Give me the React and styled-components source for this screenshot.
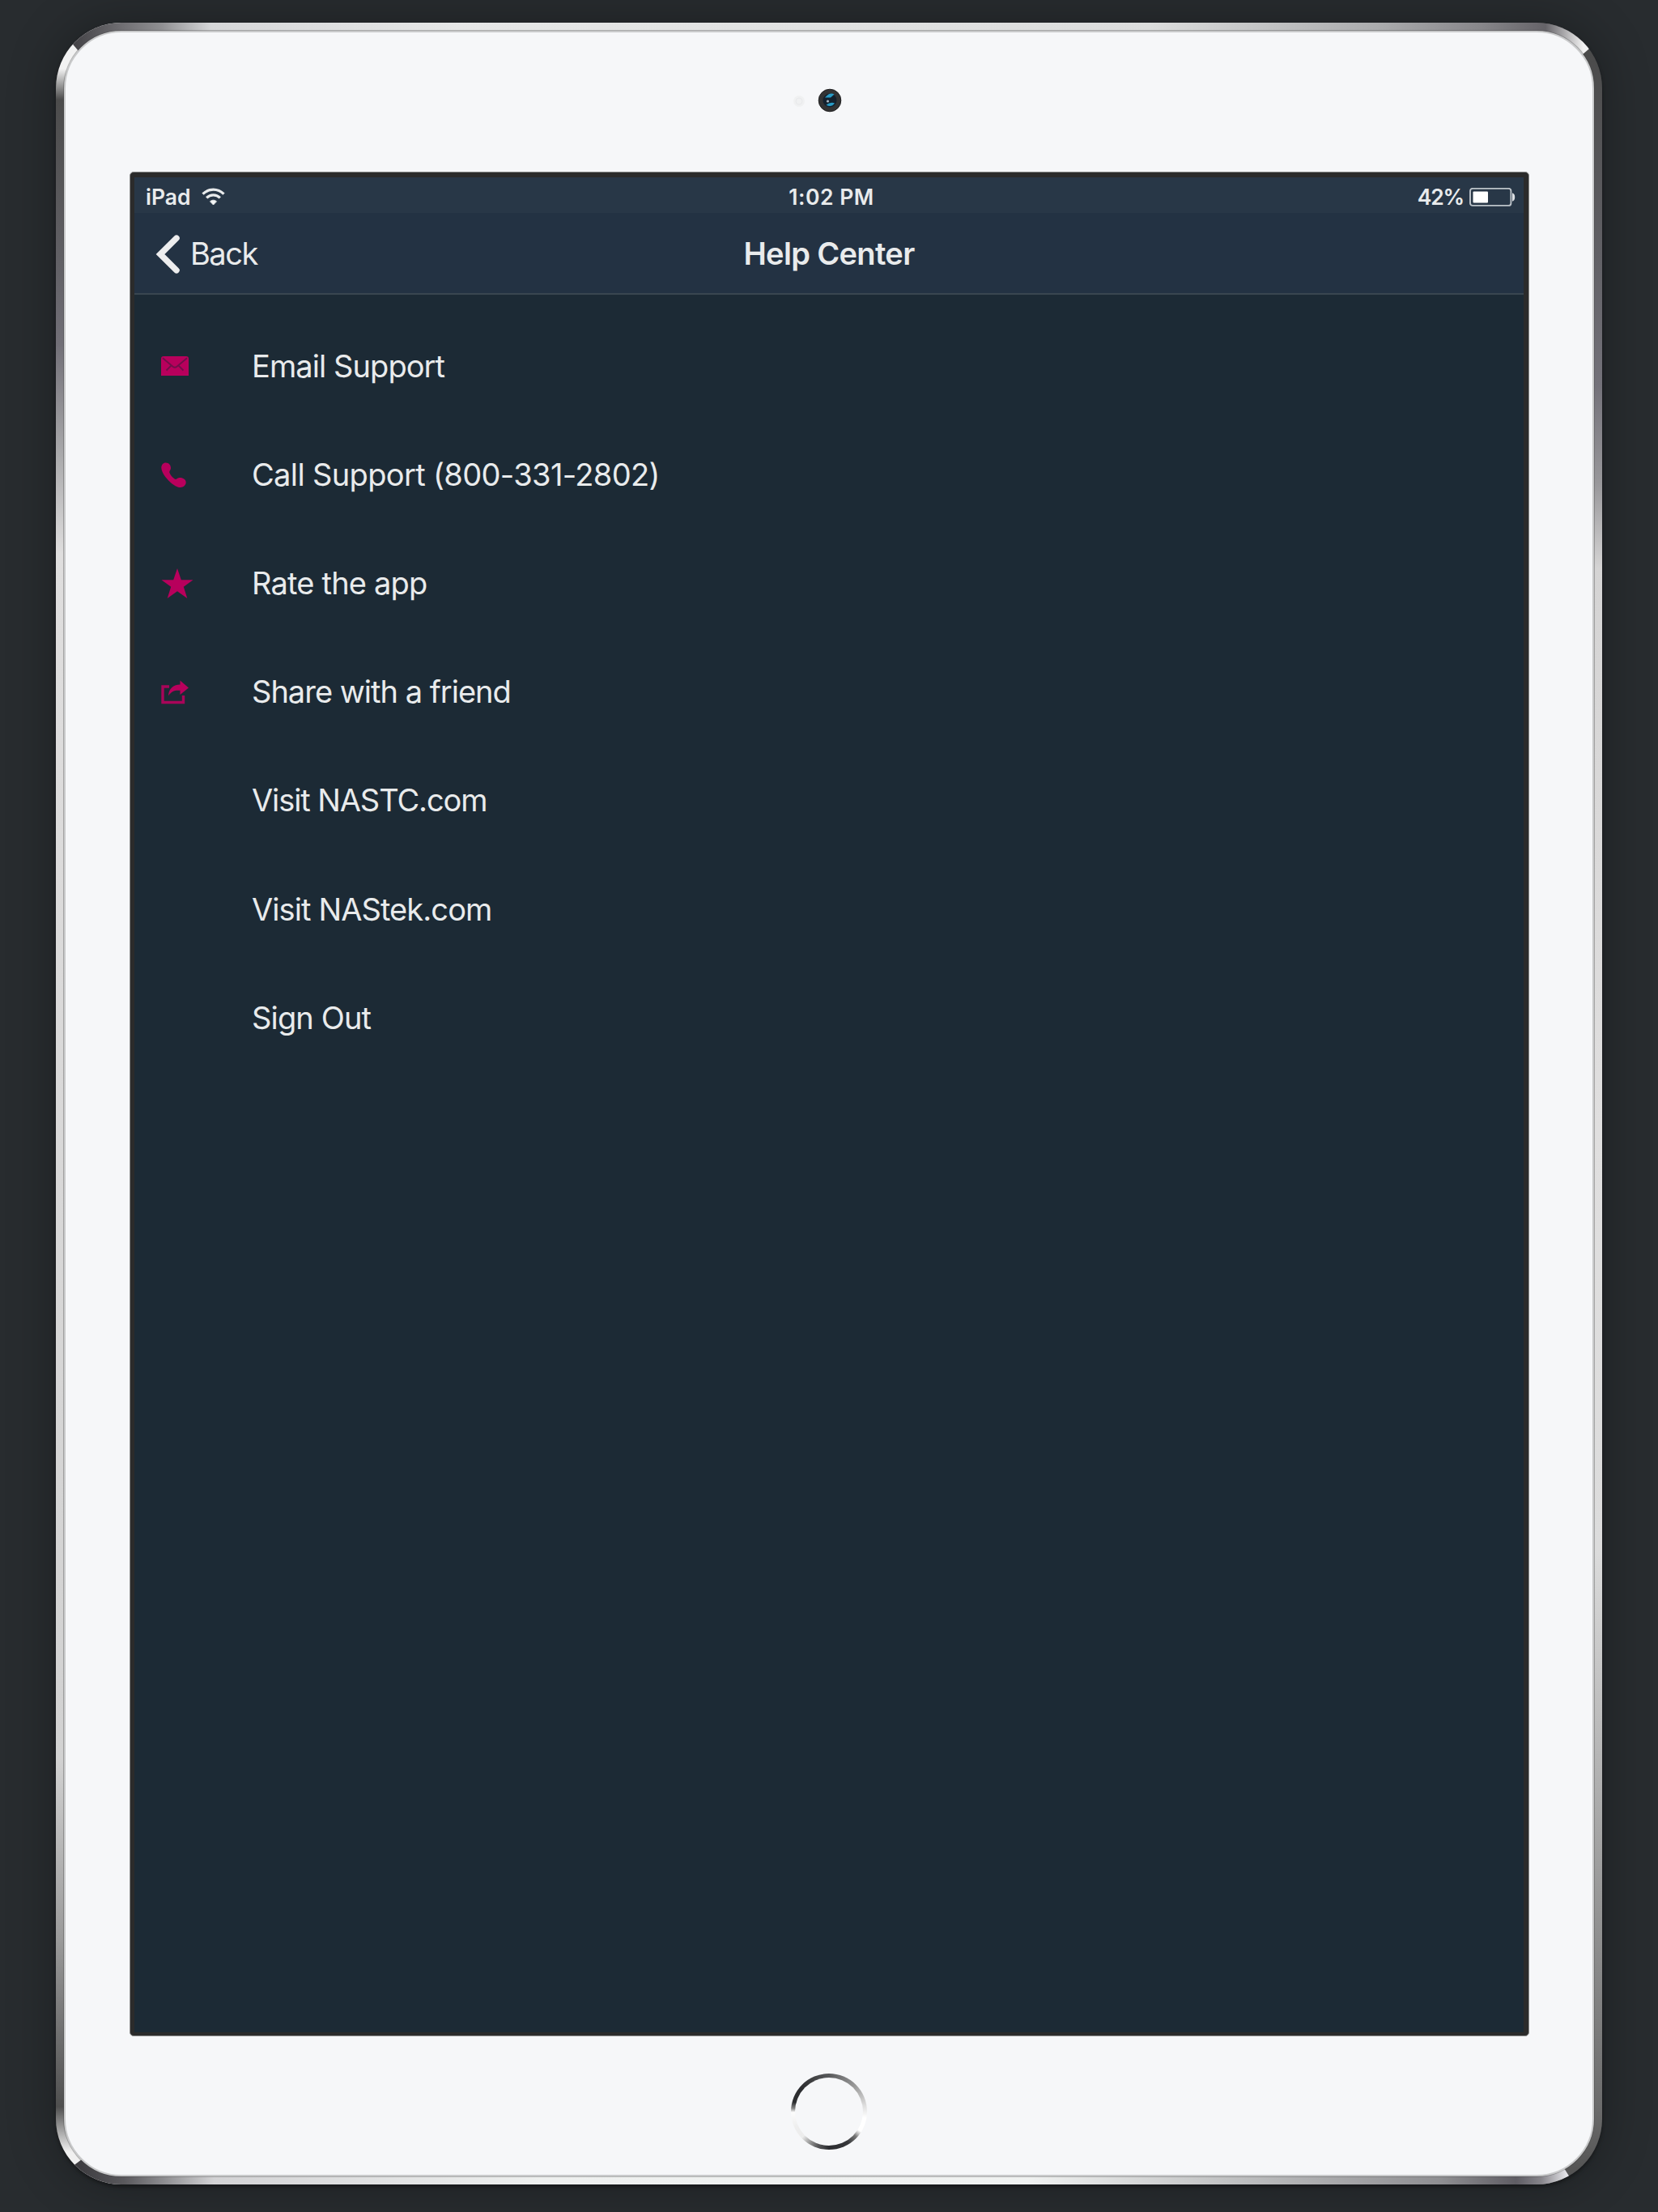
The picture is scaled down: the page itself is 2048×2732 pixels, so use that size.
import React from "react";
import styled, { createGlobalStyle } from "styled-components";

const GlobalStyle = createGlobalStyle`
  html, body { margin: 0; background: #282c2f; }
  body { font-family: Inter, "Liberation Sans", sans-serif; }
`;

const Page = styled.main`
  box-sizing: border-box;
  width: 2048px;
  height: 2732px;
  padding: 28px 69px 34px;
  overflow: hidden;
  background: #282c2f;
`;

const Device = styled.div`
  position: relative;
  box-sizing: border-box;
  width: 1910px;
  height: 2670px;
  padding: 10px;
  border-radius: 81px;
  box-shadow: 0 3px 4px rgba(0, 0, 0, 0.35), 0 0 60px rgba(0, 0, 0, 0.3);
  background:
    linear-gradient(180deg, #f2f2f2 57px, #4c4c4c 95px, #626166 300px, #716f77 397px, #aaaaac 535px, #dfdede 656px, #d2d2d2 2144px, #9a9a9a 2369px, #4f4f4f 2574px, #f0f0f0 2630px) left / 50% 100% no-repeat,
    linear-gradient(180deg, #4a4a4a 33px, #626166 293px, #74727a 449px, #99989b 570px, #d5d4d4 674px, #e0dfdf 1366px, #dcdcdc 1885px, #b4b4b4 2150px, #6b6b6b 2576px, #555555 2650px) right / 50% 100% no-repeat;
`;

const RimEdge = styled.div`
  position: absolute;
  inset: 0;
  border-radius: 81px;
  background: ${(p) => p.$fill};
  clip-path: ${(p) => p.$clip};
`;

const TOP_FILL =
  "linear-gradient(90deg, #454448 24px, #6f6e72 81px, #8f8f92 130px, #d6d7d9 192px, #e6e7e7 500px, #dcdddd 1350px, #a9aaac 1640px, #87868a 1760px, #656368 1840px, #f2f2f2 1887px)";
const BOTTOM_FILL =
  "linear-gradient(90deg, #3f3e42 32px, #5a595d 85px, #8f8f92 135px, #d3d3d5 195px, #eef0ef 600px, #f0f2f1 1200px, #8f8f92 1711px, #5f5d64 1804px, #87858b 1835px, #e4e4e8 1866px)";

const Face = styled.div`
  position: relative;
  box-sizing: border-box;
  width: 1890px;
  height: 2650px;
  padding: 172px 79px 0;
  border: 2px solid #c9cacb;
  border-radius: 71px;
  background: #f6f7f9;
  box-shadow: 0 0 0 1px rgba(60, 60, 60, 0.35);
`;

const Camera = styled.svg`
  position: absolute;
  left: 895px;
  top: 69px;
`;

const Bezel = styled.div`
  box-sizing: border-box;
  width: 1729px;
  height: 2303px;
  padding: 6px 6px 4px 5px;
  border: 1px solid #8b8c8c;
  border-radius: 5px;
  background: #2b2b2b;
`;

const Screen = styled.div`
  display: flex;
  flex-direction: column;
  width: 1716px;
  height: 2291px;
  background: #1c2a35;
  color: #e9ebec;
`;

const StatusBar = styled.div`
  box-sizing: border-box;
  display: grid;
  grid-template-columns: 1fr auto 1fr;
  align-items: center;
  height: 44px;
  padding: 5px 10px 0 14px;
  background: #283747;
`;

const StatusGroup = styled.div`
  display: flex;
  align-items: center;
  justify-content: ${(p) => (p.$end ? "flex-end" : "flex-start")};
  gap: ${(p) => p.$gap}px;
`;

const Label = styled.span`
  font-size: ${(p) => p.$size}px;
  font-weight: ${(p) => p.$weight || 400};
  letter-spacing: ${(p) => p.$track || 0}px;
  line-height: 1.2;
  white-space: nowrap;
`;

const Clock = styled(Label)`
  padding-left: 2px;
`;

const NavBar = styled.header`
  box-sizing: border-box;
  display: grid;
  grid-template-columns: 1fr auto 1fr;
  align-items: center;
  height: 101px;
  padding: 3px 26px 0;
  border-bottom: 2px solid #394650;
  background: #233243;
`;

const BackButton = styled.div`
  display: flex;
  align-items: center;
  gap: 13px;
`;

const List = styled.ul`
  margin: 0;
  padding: 21.4px 0 0 33px;
  list-style: none;
`;

const Row = styled.li`
  display: flex;
  align-items: center;
  height: 134.2px;
`;

const IconSlot = styled.span`
  display: flex;
  align-items: center;
  width: 112px;
  height: 40px;
`;

const HomeButton = styled.div`
  box-sizing: border-box;
  width: 94px;
  height: 94px;
  margin: 46px auto 0;
  padding: 5px;
  border-radius: 50%;
  background: conic-gradient(#58595b 0deg, #999999 45deg, #dddddd 80deg, #ffffff 100deg, #ffffff 122deg, #777777 133deg, #36373a 148deg, #2b2c30 180deg, #58585a 198deg, #999999 212deg, #ececec 226deg, #eeeeee 245deg, #fcfcfc 269deg, #888888 275deg, #2c2d30 285deg, #2c2d30 310deg, #444547 338deg, #58595b 360deg);
`;

const HomeCap = styled.div`
  width: 84px;
  height: 84px;
  border-radius: 50%;
  background: #f6f7f9;
`;

const PINK = "#b8005c";

const Wifi = () => (
  <svg width="29" height="22" viewBox="0 0 29 22" fill="none" stroke="#e9ebec">
    <path d="M1.5 7.6C9 .2 20 .2 27.5 7.6" strokeWidth="3.3" />
    <path d="M6.2 12.3c4.8-4.6 11.8-4.6 16.6 0" strokeWidth="3.2" />
    <path d="M14.5 21l-4-4.2c2.3-2.1 5.7-2.1 8 0z" fill="#f4f5f5" />
  </svg>
);

const Battery = () => (
  <svg width="57" height="23" viewBox="0 0 57 23">
    <rect x="1" y="0.9" width="50.4" height="21" rx="3" fill="none" stroke="#bcc3c9" strokeWidth="1.9" />
    <rect x="4.5" y="4.6" width="18.5" height="14" rx="1" fill="#fff" />
    <path d="M53 6.3q3.2 1 3.2 5.2t-3.2 5.2z" fill="#dde0e3" />
  </svg>
);

const Chevron = () => (
  <svg width="30" height="48" viewBox="0 0 30 48">
    <path d="M26 4.2L6 24l20 19.8" fill="none" stroke="#ededee" strokeWidth="7.5" strokeLinecap="round" />
  </svg>
);

const Mail = () => (
  <svg width="34" height="24" viewBox="0 0 34 24">
    <path d="M3 0h28q3 0 3 3v21H0V3q0-3 3-3z" fill={PINK} />
    <path
      d="M2 2.2L14.5 12.8q2.5 2 5 0L32 2.2M6.5 17.5L12.5 11.5M27.5 17.5L21.5 11.5"
      fill="none"
      stroke="#700f49"
      strokeWidth="1.8"
    />
  </svg>
);

const Phone = () => (
  <svg width="32" height="32" viewBox="0 0 32 32">
    <path
      d="M5.8.4C9.5.4 12 3.2 12 7c0 2.7-2.1 3.6-1.7 5.4.7 2.7 3.4 6 6.4 8.2 2 1.4 3-1.2 5.6-1.5 4.2-.5 8.6 1.9 8.4 6-.2 3.7-4 6.5-7.9 5.9C14.8 29.7.3 15.5.3 6.4.3 3 2.7.4 5.8.4z"
      fill={PINK}
    />
  </svg>
);

const Star = () => (
  <svg width="40" height="38" viewBox="0 0 40 38">
    <path
      d="M20 0l4.8 14.3H39.5L27.8 22.7 32.3 37 20 28.3 7.7 37l4.5-14.3L.5 14.3H15.2z"
      fill={PINK}
    />
  </svg>
);

const Share = () => (
  <svg width="34" height="30" viewBox="0 0 34 30">
    <path d="M10 8H2v19.5h25.5V19" fill="none" stroke="#a80559" strokeWidth="3.4" />
    <path
      d="M23.5.5L34 9.5 23.5 18v-5.2c-6.3-.7-11 .9-14.5 6.6C9.3 11 14.5 5.6 23.5 5.4z"
      fill={PINK}
    />
  </svg>
);

const ITEMS = [
  { label: "Email Support", icon: <Mail />, track: -0.92 },
  { label: "Call Support (800-331-2802)", icon: <Phone />, track: -0.64 },
  { label: "Rate the app", icon: <Star />, track: -0.8 },
  { label: "Share with a friend", icon: <Share />, track: -0.99 },
  { label: "Visit NASTC.com", track: -1.1 },
  { label: "Visit NAStek.com", track: -0.9 },
  { label: "Sign Out", track: -0.85 },
];

export default function App() {
  return (
    <>
      <GlobalStyle />
      <Page>
        <Device>
          <RimEdge $fill={TOP_FILL} $clip="polygon(0 0, 1910px 0, 1910px 18.4px, 1870px 52.7px, 40px 49px, 0 2.3px)" />
          <RimEdge $fill={BOTTOM_FILL} $clip="polygon(0 2663px, 50px 2625.5px, 1855px 2637px, 1875.5px 2670px, 0 2670px)" />
          <Face>
            <Camera width="66" height="32" viewBox="0 0 66 32">
              <circle cx="11" cy="16" r="7" fill="#f0f1f2" />
              <circle cx="11" cy="16" r="4" fill="none" stroke="#e8e9eb" strokeWidth="1" />
              <circle cx="49" cy="15" r="13.8" fill="#333334" stroke="#1d1d1e" />
              <circle cx="49" cy="15" r="8.5" fill="#14212e" />
              <path d="M43 11.5q6-7.500 11.500-4l-4.500 4z" fill="#2a9cc6" />
              <path d="M44.500 20.500q5.500-4 10.500-2-4.500 6-10.500 2z" fill="#2a9cc6" />
              <circle cx="46.5" cy="16" r="1.6" fill="#a9b7c4" />
            </Camera>
            <Bezel>
              <Screen>
                <StatusBar>
                  <StatusGroup $gap={13}>
                    <Label $size={26.5} $weight={600}>iPad</Label>
                    <Wifi />
                  </StatusGroup>
                  <Clock $size={26.5} $weight={600} $track={0.5}>1:02 PM</Clock>
                  <StatusGroup $end $gap={7}>
                    <Label $size={26.5} $weight={600} $track={-1.2}>42%</Label>
                    <Battery />
                  </StatusGroup>
                </StatusBar>
                <NavBar>
                  <BackButton>
                    <Chevron />
                    <Label $size={38} $track={-1.5}>Back</Label>
                  </BackButton>
                  <Label $size={38} $weight={600} $track={-0.65}>Help Center</Label>
                </NavBar>
                <List>
                  {ITEMS.map((item) => (
                    <Row key={item.label}>
                      <IconSlot>{item.icon}</IconSlot>
                      <Label $size={38} $track={item.track}>{item.label}</Label>
                    </Row>
                  ))}
                </List>
              </Screen>
            </Bezel>
            <HomeButton>
              <HomeCap />
            </HomeButton>
          </Face>
        </Device>
      </Page>
    </>
  );
}
